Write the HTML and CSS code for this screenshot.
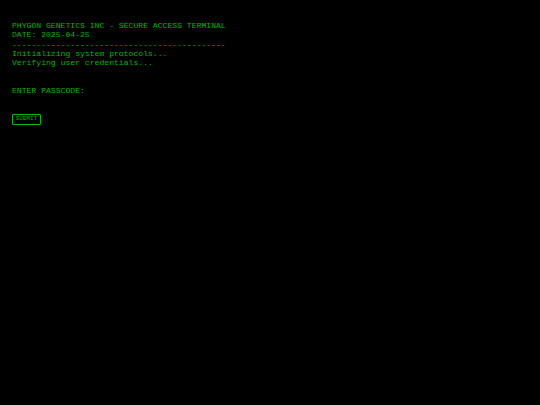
FILE: index.html
```html
<!DOCTYPE html>
<html lang="en">
<head>
    <meta charset="UTF-8">
    <meta name="viewport" content="width=device-width, initial-scale=1.0">
    <title>Secure Access Terminal</title>
    <link rel="stylesheet" href="styles.css">
</head>
<body>
    <div class="terminal">
        <div class="output">
            <div class="line">PHYGON GENETICS INC - SECURE ACCESS TERMINAL</div>
            <div class="line">DATE: 2025-04-25</div>
            <div class="line">--------------------------------------------</div>
            <div class="line">Initializing system protocols...</div>
            <div class="line">Verifying user credentials...</div>
        </div>
        <form class="login">
            <label class="prompt">ENTER PASSCODE: <input class="passcode" type="password" value=""></label>
            <button class="btnSubmit" type="button">SUBMIT</button>
        </form>
    </div>
</body>
</html>
```
FILE: styles.css
```css
*
{
    box-sizing: border-box;
}
body
{
    margin: 0px;
    background-color: #000;
}
.terminal
{
    width: 100vw;
    height: 100vh;
    padding: 21px 12px;
    font-family: "Courier New", Courier, "Nimbus Mono PS", FreeMono, "Liberation Mono", monospace;
    font-size: 8.1px;
    line-height: 9.3px;
    color: #00b800;
}
.line
{
    white-space: pre;
}
.login
{
    margin-top: 19px;
    display: flex;
    flex-direction: column;
    align-items: flex-start;
    gap: 18px;
}
.prompt
{
    display: flex;
    align-items: center;
}
.passcode
{
    width: 100px;
    height: 9px;
    margin-left: 4px;
    padding: 0px;
    border: 0px;
    outline: 0px;
    background: transparent;
    color: #00b800;
    font-family: inherit;
    font-size: 8px;
}
.btnSubmit
{
    display: flex;
    align-items: center;
    justify-content: center;
    width: 29px;
    height: 11px;
    padding: 0px;
    border: 1px solid #00b800;
    border-radius: 1px;
    background-color: #000;
    color: #00b800;
    font-family: "Courier New", Courier, "Liberation Mono", monospace;
    font-size: 6px;
    line-height: 6px;
    cursor: pointer;
}
```
